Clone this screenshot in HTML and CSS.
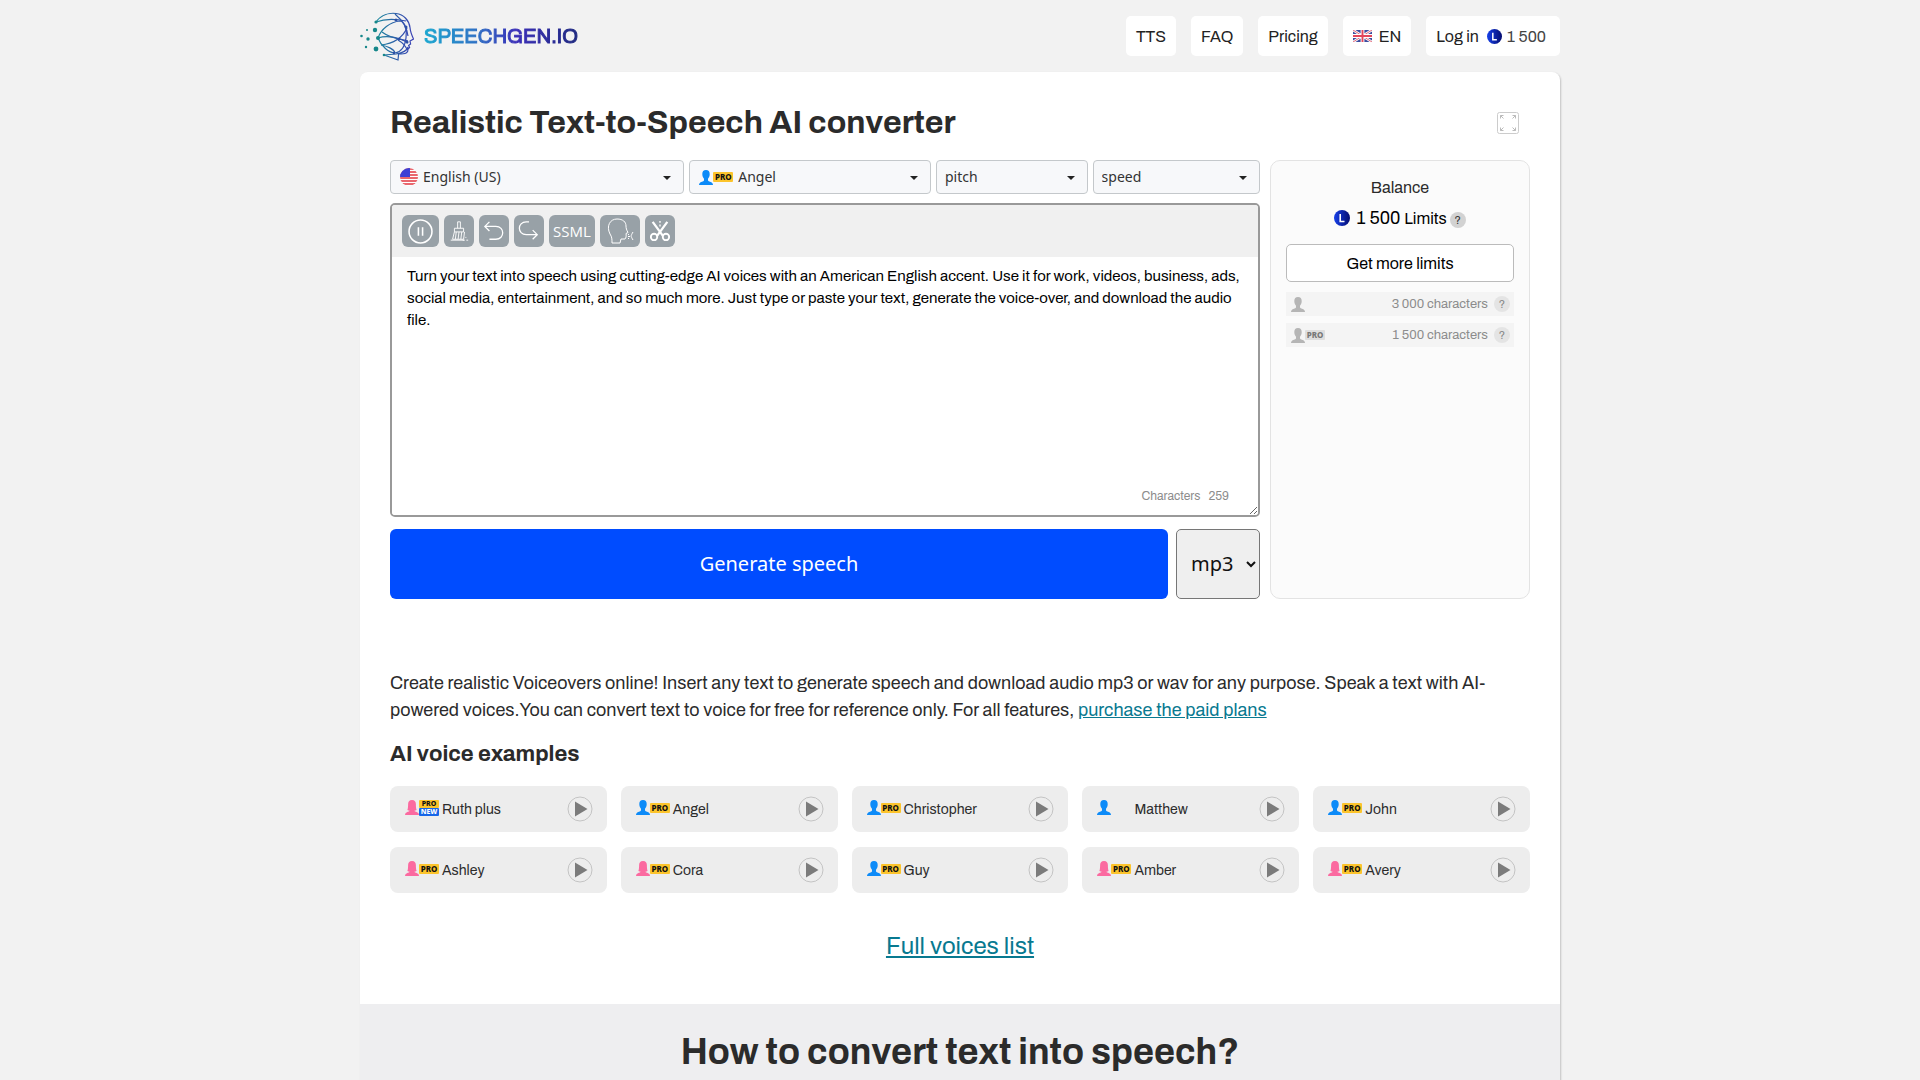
FILE: index.html
```html
<!DOCTYPE html>
<html lang="en">
<head>
    <meta charset="UTF-8">
    <meta name="viewport" content="width=device-width, initial-scale=1">
    <title>Realistic Text-to-Speech AI converter</title>
    <link rel="stylesheet" href="styles.css">
</head>
<body>
    <!-- shared icons -->
    <svg class="sprite" aria-hidden="true">
        <symbol id="man" viewBox="0 0 14 15">
            <path d="M7 0c2.500 0 3.700 1.600 3.700 4 0 2-.7 3.700-1.700 4.800v1.700c.5 1.200 3.500 1.300 4.400 2.700.4.500.6 1.100.6 1.800H0c0-.7.200-1.300.6-1.800C1.500 11.800 4.500 11.700 5 10.500V8.800C4 7.700 3.300 6 3.300 4c0-2.400 1.200-4 3.700-4z"/>
        </symbol>
        <symbol id="woman" viewBox="0 0 14 15">
            <path d="M7 0c2.800 0 3.900 1.700 3.900 4.300 0 2.200.1 4.200.7 5.700-.8.500-1.500.7-2.300.7.700 1.100 3.200 1.100 4 2.400.4.500.7 1.200.7 1.900H0c0-.7.300-1.400.7-1.900.8-1.300 3.300-1.300 4-2.400-.8 0-1.500-.2-2.300-.7.600-1.500.7-3.500.7-5.700C3.100 1.700 4.200 0 7 0z"/>
        </symbol>
        <symbol id="play" viewBox="0 0 26 26">
            <circle cx="13" cy="13" r="12" fill="none" stroke="#c4c4c4"/>
            <path d="M8 5.500v15L20.500 13z" fill="#7b7b7b"/>
        </symbol>
        <symbol id="coin" viewBox="0 0 16 16">
            <circle cx="8" cy="8" r="8" fill="url(#coin-fill)"/>
            <path d="M6.200 4v7.500h4.300" fill="none" stroke="#fff" stroke-width="1.600"/>
        </symbol>
        <linearGradient id="coin-fill" x1="0" x2="1" y1="0" y2="0">
            <stop offset="0" stop-color="#1740e8"/>
            <stop offset="1" stop-color="#040c70"/>
        </linearGradient>
    </svg>

    <header class="header">
        <a class="logo" href="#">
            <svg class="logo-icon" viewBox="0 0 54 49" fill="none">
                <defs>
                    <linearGradient id="head-line" x1="16" x2="54" y1="0" y2="0" gradientUnits="userSpaceOnUse">
                        <stop offset="0" stop-color="#1a8b9c"/>
                        <stop offset=".5" stop-color="#2b5fa8"/>
                        <stop offset="1" stop-color="#3a3fb5"/>
                    </linearGradient>
                </defs>
                <g stroke="url(#head-line)" stroke-width="1.200">
                    <path d="M16 10C21 3 29 .5 36 1.500c8 1 13 7 14 14 .3 4 1 6 3.500 11.500L50 29l.6 3-2 1.500 1 2-1.500 1.500c0 4-2 5-9.500 5L38 48l-14-5 12-1c6-1 11-3 12-7"/>
                    <path d="M16 10c8-3 20-3 30-1"/>
                    <path d="M18 26c3-9 12-16 22-17 6 1 7 10 6 17-1 8-5 14-11 15-6 0-14-7-17-15z"/>
                    <path d="M22 20c9 7 19 7 26 9"/>
                    <path d="M18 26c9-3 21-1 30 5"/>
                    <path d="M21 33c9-1 20-4 26-17M21 33c6 1 13 4 14 8"/>
                    <path d="M35 2c7 6 12 12 13 22M38 28c5 3 8 6 9 10"/>
                </g>
                <g fill="#16878a">
                    <circle cx="16" cy="10" r="1.600"/>
                    <circle cx="15" cy="18" r="2.200"/>
                    <circle cx="18" cy="26" r="2"/>
                    <circle cx="16" cy="37" r="2.400"/>
                    <circle cx="8" cy="27" r="1.700"/>
                    <circle cx="7" cy="18" r="1"/>
                    <circle cx="6" cy="35" r="1.200"/>
                    <circle cx="1.500" cy="24" r="1.300"/>
                    <circle cx="24" cy="43" r="1.300"/>
                </g>
                <g fill="#2d4fa6">
                    <circle cx="36" cy="8" r="1.500"/>
                    <circle cx="46" cy="15" r="1.500"/>
                    <circle cx="39" cy="27" r="1.300"/>
                    <circle cx="47" cy="30" r="1.500"/>
                    <circle cx="34" cy="41" r="1.200"/>
                </g>
            </svg>
            <span class="logo-text">SPEECHGEN.IO</span>
        </a>
        <nav class="nav">
            <a class="nav-link" href="#">TTS</a>
            <a class="nav-link" href="#">FAQ</a>
            <a class="nav-link" href="#">Pricing</a>
            <a class="nav-link nav-lang" href="#">
                <svg class="flag-uk" viewBox="0 0 20 12" preserveAspectRatio="none">
                    <path fill="#273a95" d="M0 0h20v12H0z"/>
                    <path stroke="#fff" stroke-width="2.600" d="M0 0l20 12M20 0L0 12"/>
                    <path stroke="#e05468" stroke-width="1" d="M0 0l20 12M20 0L0 12"/>
                    <path stroke="#fff" stroke-width="4" d="M10 0v12M0 6h20"/>
                    <path stroke="#e0334a" stroke-width="2" d="M10 0v12M0 6h20"/>
                </svg>
                EN
            </a>
            <a class="nav-link nav-login" href="#">
                Log in
                <svg class="coin"><use href="#coin"/></svg>
                <span class="nav-limits">1 500</span>
            </a>
        </nav>
    </header>

    <main class="page">
        <section class="converter">
            <div class="title-row">
                <h1>Realistic Text-to-Speech AI converter</h1>
                <button class="fullscreen" type="button" aria-label="Full screen">
                    <svg viewBox="0 0 22 22" fill="none" stroke="#bbb">
                        <rect x=".5" y=".5" width="21" height="21" rx="2" stroke="#ccc"/>
                        <path d="M3.500 6.500v-3h3M3.500 3.500l3 3M15.500 3.500h3v3M18.500 3.500l-3 3M3.500 15.500v3h3M3.500 18.500l3-3M18.500 15.500v3h-3M18.500 18.500l-3-3"/>
                    </svg>
                </button>
            </div>

            <div class="workspace">
                <form class="editor">
                    <div class="options">
                        <div class="option option-lang">
                            <svg class="flag-us" viewBox="0 0 18 18">
                                <clipPath id="round"><circle cx="9" cy="9" r="9"/></clipPath>
                                <g clip-path="url(#round)">
                                    <path fill="#fff" d="M0 0h18v18H0z"/>
                                    <path stroke="#e2363f" stroke-width="1.500" d="M0 1h18M0 4h18M0 7h18M0 10h18M0 13h18M0 16h18"/>
                                    <path fill="#3d3fd6" d="M0 0h10v9H0z"/>
                                </g>
                            </svg>
                            <select aria-label="Language"><option>English (US)</option></select>
                        </div>
                        <div class="option option-voice">
                            <span class="person man"><svg><use href="#man"/></svg><b class="pro">PRO</b></span>
                            <select aria-label="Voice"><option>Angel</option></select>
                        </div>
                        <div class="option option-pitch">
                            <select aria-label="Pitch"><option>pitch</option></select>
                        </div>
                        <div class="option option-speed">
                            <select aria-label="Speed"><option>speed</option></select>
                        </div>
                    </div>

                    <div class="text-box">
                        <div class="toolbar">
                            <button class="tool tool-wide" type="button" aria-label="Pause">
                                <svg viewBox="0 0 24 24"><circle cx="12" cy="12" r="11" stroke-width="1.500"/><path d="M10 8v8M14 8v8" stroke-width="1.500"/></svg>
                            </button>
                            <button class="tool" type="button" aria-label="Clear">
                                <svg viewBox="0 0 24 24"><path d="M10.500 9V2h3v7M7 9h10v4H7zM7 13l-2 8h12l1-8M9 13l-1 8M12 13l-1 8M15 13l-1 8M3 22h15M19 19h1M20 22h2M16 22h2"/></svg>
                            </button>
                            <button class="tool" type="button" aria-label="Undo">
                                <svg viewBox="0 0 24 24"><path d="M7 2L2 7l5 5M2 7h12c10 0 10 14 0 14H7" stroke-width="1.400"/></svg>
                            </button>
                            <button class="tool" type="button" aria-label="Redo">
                                <svg viewBox="0 0 24 24"><path d="M12 2H9C-1 2-1 16 9 16h12M16 11l5 5-5 5" stroke-width="1.400"/></svg>
                            </button>
                            <button class="tool tool-ssml" type="button">SSML</button>
                            <button class="tool tool-voice" type="button" aria-label="Dialogue">
                                <svg viewBox="0 0 28 26"><path d="M6 25c0-4 0-6-2-9C0 8 4 1 11 1c6 0 9 3 9 7 0 2 .5 4 2 6.500l-2 1c.5 2 0 5-1 5.500h-4l-1 4zM22 17l1-1M22 18.500h2M22 20l1 1M27 14c-1 1.500-2 4-2 4s1 2.500 2 4"/></svg>
                            </button>
                            <button class="tool" type="button" aria-label="Cut">
                                <svg viewBox="0 0 24 24"><path d="M4 2l11 15M20 2L9 17" stroke-width="2.500"/><circle cx="5.500" cy="18.500" r="3.500" stroke-width="2"/><circle cx="18.500" cy="18.500" r="3.500" stroke-width="2"/><path d="M12 1v2M12 5v2" stroke-width="1.500"/></svg>
                            </button>
                        </div>
                        <textarea aria-label="Text to convert">Turn your text into speech using cutting-edge AI voices with an American English accent. Use it for work, videos, business, ads, social media, entertainment, and so much more. Just type or paste your text, generate the voice-over, and download the audio file.</textarea>
                        <div class="counter"><span>Characters</span><span>259</span></div>
                    </div>

                    <div class="actions">
                        <button class="generate" type="button">Generate speech</button>
                        <select class="format" aria-label="Audio format">
                            <option>mp3</option>
                            <option>wav</option>
                        </select>
                    </div>
                </form>

                <aside class="balance">
                    <div class="balance-title">Balance</div>
                    <div class="balance-sum">
                        <svg class="coin"><use href="#coin"/></svg>
                        <span class="sum">1 500</span> Limits
                        <span class="help">?</span>
                    </div>
                    <button class="more" type="button">Get more limits</button>
                    <div class="quota">
                        <span class="person"><svg><use href="#man"/></svg></span>
                        <span class="quota-text">3 000 characters</span>
                        <span class="help">?</span>
                    </div>
                    <div class="quota">
                        <span class="person"><svg><use href="#man"/></svg><b class="pro">PRO</b></span>
                        <span class="quota-text">1 500 characters</span>
                        <span class="help">?</span>
                    </div>
                </aside>
            </div>

            <p class="intro">Create realistic Voiceovers online! Insert any text to generate speech and download audio mp3 or wav for any purpose. Speak a text with AI-powered voices.You can convert text to voice for free for reference only. For all features, <a href="#">purchase the paid plans</a></p>

            <h2 class="examples-title">AI voice examples</h2>
            <div class="voices">
                <div class="voice">
                    <span class="person woman"><svg><use href="#woman"/></svg><span class="badges"><b class="pro">PRO</b><b class="new">NEW</b></span></span>
                    <span class="voice-name">Ruth plus</span>
                    <button class="play" type="button" aria-label="Play Ruth plus"><svg><use href="#play"/></svg></button>
                </div>
                <div class="voice">
                    <span class="person man"><svg><use href="#man"/></svg><b class="pro">PRO</b></span>
                    <span class="voice-name">Angel</span>
                    <button class="play" type="button" aria-label="Play Angel"><svg><use href="#play"/></svg></button>
                </div>
                <div class="voice">
                    <span class="person man"><svg><use href="#man"/></svg><b class="pro">PRO</b></span>
                    <span class="voice-name">Christopher</span>
                    <button class="play" type="button" aria-label="Play Christopher"><svg><use href="#play"/></svg></button>
                </div>
                <div class="voice">
                    <span class="person man"><svg><use href="#man"/></svg></span>
                    <span class="voice-name">Matthew</span>
                    <button class="play" type="button" aria-label="Play Matthew"><svg><use href="#play"/></svg></button>
                </div>
                <div class="voice">
                    <span class="person man"><svg><use href="#man"/></svg><b class="pro">PRO</b></span>
                    <span class="voice-name">John</span>
                    <button class="play" type="button" aria-label="Play John"><svg><use href="#play"/></svg></button>
                </div>
                <div class="voice">
                    <span class="person woman"><svg><use href="#woman"/></svg><b class="pro">PRO</b></span>
                    <span class="voice-name">Ashley</span>
                    <button class="play" type="button" aria-label="Play Ashley"><svg><use href="#play"/></svg></button>
                </div>
                <div class="voice">
                    <span class="person woman"><svg><use href="#woman"/></svg><b class="pro">PRO</b></span>
                    <span class="voice-name">Cora</span>
                    <button class="play" type="button" aria-label="Play Cora"><svg><use href="#play"/></svg></button>
                </div>
                <div class="voice">
                    <span class="person man"><svg><use href="#man"/></svg><b class="pro">PRO</b></span>
                    <span class="voice-name">Guy</span>
                    <button class="play" type="button" aria-label="Play Guy"><svg><use href="#play"/></svg></button>
                </div>
                <div class="voice">
                    <span class="person woman"><svg><use href="#woman"/></svg><b class="pro">PRO</b></span>
                    <span class="voice-name">Amber</span>
                    <button class="play" type="button" aria-label="Play Amber"><svg><use href="#play"/></svg></button>
                </div>
                <div class="voice">
                    <span class="person woman"><svg><use href="#woman"/></svg><b class="pro">PRO</b></span>
                    <span class="voice-name">Avery</span>
                    <button class="play" type="button" aria-label="Play Avery"><svg><use href="#play"/></svg></button>
                </div>
            </div>

            <div class="full-list"><a href="#">Full voices list</a></div>
        </section>

        <section class="how-to">
            <h2>How to convert text into speech?</h2>
        </section>
    </main>
</body>
</html>
```
FILE: styles.css
```css
* {
    box-sizing: border-box;
}

body {
    margin: 0;
    background: #f2f2f2;
    color: #2b2b2b;
    font-family: Archivo, "Liberation Sans", Arial, sans-serif;
    font-size: 16px;
}

button, select, textarea {
    font-family: inherit;
    margin: 0;
}

button {
    cursor: pointer;
}

a {
    color: #087990;
}

.sprite {
    position: absolute;
    width: 0;
    height: 0;
}

/* header */
.header {
    display: flex;
    align-items: center;
    justify-content: space-between;
    max-width: 1200px;
    height: 72px;
    margin: 0 auto;
}

.logo {
    display: flex;
    align-items: center;
    gap: 10px;
    text-decoration: none;
}

.logo-icon {
    width: 54px;
    height: 49px;
}

.logo-text {
    font-size: 20px;
    -webkit-text-stroke: 1px transparent;
    background: linear-gradient(90deg, #1aa7d0, #2f6fc4 35%, #3b2fb8 60%, #1f2a80);
    -webkit-background-clip: text;
    background-clip: text;
    color: transparent;
}

.nav {
    display: flex;
    gap: 15px;
}

.nav-link {
    display: flex;
    align-items: center;
    height: 40px;
    padding: 0 10px;
    border-radius: 5px;
    background: #fff;
    color: #222;
    text-decoration: none;
}

.flag-uk {
    width: 19px;
    height: 12px;
    margin-right: 7px;
    opacity: .9;
}

.coin {
    width: 16px;
    height: 16px;
}

.nav-login .coin {
    width: 15px;
    height: 15px;
    margin: 0 5px 0 8px;
}

.nav-login {
    padding-right: 14px;
}

.nav-limits {
    color: #444;
}

/* main card */
.page {
    max-width: 1200px;
    margin: 0 auto;
    border-radius: 8px 8px 0 0;
    background: #fff;
    box-shadow: 1px 1px 2px rgba(0, 0, 0, .2);
    overflow: hidden;
}

.converter {
    padding: 29px 30px 41px;
}

.title-row {
    display: flex;
    align-items: center;
    justify-content: space-between;
    height: 44px;
    margin-bottom: 15px;
    padding-right: 11px;
}

h1 {
    margin: 0;
    font-size: 32px;
    line-height: 44px;
}

.fullscreen {
    width: 22px;
    height: 22px;
    padding: 0;
    border: 0;
    background: none;
}

.fullscreen svg {
    display: block;
}

.workspace {
    display: flex;
    gap: 10px;
}

.editor {
    flex: 1;
    min-width: 0;
}

.options {
    display: flex;
    gap: 5px;
    margin-bottom: 9px;
}

.option {
    position: relative;
    display: flex;
    align-items: center;
    min-width: 0;
    height: 34px;
    border: 1px solid #c4c8cb;
    border-radius: 4px;
    background: #f7f8fa;
}

.option select {
    width: 100%;
    height: 100%;
    padding: 0 30px 2px 8px;
    border: 0;
    background: none;
    appearance: none;
    color: #333;
    font-family: "Noto Sans", sans-serif;
    font-size: 14px;
}

.option::after {
    content: "";
    position: absolute;
    right: 12px;
    top: 15px;
    border: 4px solid transparent;
    border-top-color: #222;
    border-bottom: 0;
    pointer-events: none;
}

.option-lang {
    flex: 295;
}

.option-voice {
    flex: 242;
}

.option-pitch {
    flex: 151;
}

.option-speed {
    flex: 167;
}

.flag-us,
.option .person {
    position: absolute;
    left: 9px;
    pointer-events: none;
}

.flag-us {
    width: 18px;
    height: 18px;
}

.option-lang select {
    padding-left: 32px;
}

.option-voice select {
    padding-left: 48px;
}

.text-box {
    position: relative;
    margin-bottom: 12px;
    border: 2px solid #999;
    border-radius: 5px;
    overflow: hidden;
}

.toolbar {
    display: flex;
    gap: 5px;
    height: 52px;
    padding: 10px;
    background: #f0f0f0;
}

.tool {
    display: flex;
    align-items: center;
    justify-content: center;
    width: 30px;
    height: 32px;
    padding: 0;
    border: 0;
    border-radius: 6px;
    background: #98a1a7;
    color: #fff;
}

.tool svg {
    width: 22px;
    height: 22px;
    fill: none;
    stroke: #fff;
}

.tool-wide {
    width: 37px;
}

.tool-wide svg {
    width: 25px;
    height: 25px;
}

.tool-ssml {
    width: 46px;
    font-family: "Open Sans", "Noto Sans", sans-serif;
    font-size: 15px;
}

.tool-voice {
    width: 40px;
}

.tool-voice svg {
    width: 28px;
    height: 26px;
}

.text-box textarea {
    display: block;
    width: 100%;
    height: 258px;
    padding: 8px 12px 8px 15px;
    border: 0;
    outline: 0;
    background: #fff;
    color: #000;
    font-size: 15px;
    line-height: 22px;
    resize: vertical;
}

.counter {
    position: absolute;
    right: 29px;
    bottom: 11px;
    display: flex;
    gap: 8px;
    color: #8c8c8c;
    font-size: 12px;
    line-height: 16px;
}

.actions {
    display: flex;
    gap: 8px;
}

.generate {
    flex: 1;
    height: 70px;
    padding: 0 0 2px;
    border: 0;
    border-radius: 6px;
    background: #004cff;
    color: #fff;
    font-family: "Noto Sans", sans-serif;
    font-size: 20px;
}

.format {
    width: 84px;
    height: 70px;
    padding: 0 0 2px 10px;
    border: 1px solid #767676;
    border-radius: 5px;
    background: #efefef;
    color: #111;
    font-family: "Noto Sans", sans-serif;
    font-size: 20px;
}

/* balance */
.balance {
    width: 260px;
    padding: 15px;
    border: 1px solid #e3e3e3;
    border-radius: 10px;
    background: #fbfbfb;
    text-align: center;
}

.balance-title {
    line-height: 24px;
}

.balance-sum {
    display: flex;
    align-items: center;
    justify-content: center;
    height: 36px;
    margin-bottom: 8px;
    color: #000;
}

.sum {
    margin: 0 4px 0 6px;
    font-size: 18px;
}

.help {
    width: 16px;
    height: 16px;
    border-radius: 50%;
    background: #d2d2d2;
    color: #333;
    font-size: 11px;
    line-height: 16px;
    text-align: center;
}

.balance-sum .help {
    margin: 3px 0 0 3px;
}

.more {
    width: 100%;
    height: 38px;
    margin-bottom: 10px;
    border: 1px solid #bbb;
    border-radius: 5px;
    background: #fff;
    color: #000;
    font-size: 16px;
}

.quota {
    display: flex;
    align-items: center;
    height: 24px;
    margin-bottom: 7px;
    padding: 0 4px 0 5px;
    background: #f4f4f4;
    color: #8c8c8c;
    font-size: 13px;
}

.quota .person {
    fill: #b5b5b5;
}

.quota .pro {
    background: #dedede;
    color: #777;
}

.quota .help {
    background: #e4e4e4;
    color: #888;
}

.quota-text {
    margin: 0 6px 0 auto;
}

/* person icon with badge */
.person {
    display: flex;
    align-items: center;
}

.person svg {
    width: 14px;
    height: 15px;
}

.man {
    fill: #0d8bf8;
}

.woman {
    fill: #fb6aa0;
}

.pro,
.new {
    display: block;
    width: 20px;
    height: 10px;
    border-radius: 1px;
    background: #fcc42c;
    color: #111;
    font-family: "Noto Sans", sans-serif;
    font-size: 8px;
    font-weight: 800;
    line-height: 10px;
    text-align: center;
    overflow: hidden;
}

.badges .pro,
.badges .new {
    height: 8px;
    font-size: 7px;
    line-height: 8px;
}

.new,
.badges .new {
    background: #1766e8;
    color: #fff;
}

/* text and voices */
.intro {
    margin: 71px 0 0;
    font-size: 18px;
    line-height: 27px;
}

.examples-title {
    margin: 14px 0 16px;
    font-size: 22px;
    line-height: 32px;
}

.voices {
    display: grid;
    grid-template-columns: repeat(5, 1fr);
    gap: 15px 14px;
}

.voice {
    display: flex;
    align-items: center;
    height: 46px;
    padding: 0 14px 0 15px;
    border-radius: 8px;
    background: #ededed;
}

.voice .person {
    width: 34px;
    margin: 0 3px 3px 0;
}

.voice-name {
    flex: 1;
    font-size: 14px;
}

.play {
    width: 26px;
    height: 26px;
    padding: 0;
    border: 0;
    background: none;
}

.play svg {
    display: block;
    width: 26px;
    height: 26px;
}

.full-list {
    margin-top: 36px;
    font-size: 24px;
    line-height: 34px;
    text-align: center;
}

.how-to {
    min-height: 160px;
    padding: 24px 30px;
    background: #eeeef0;
    text-align: center;
}

.how-to h2 {
    margin: 0;
    font-size: 36px;
    line-height: 48px;
}
```
